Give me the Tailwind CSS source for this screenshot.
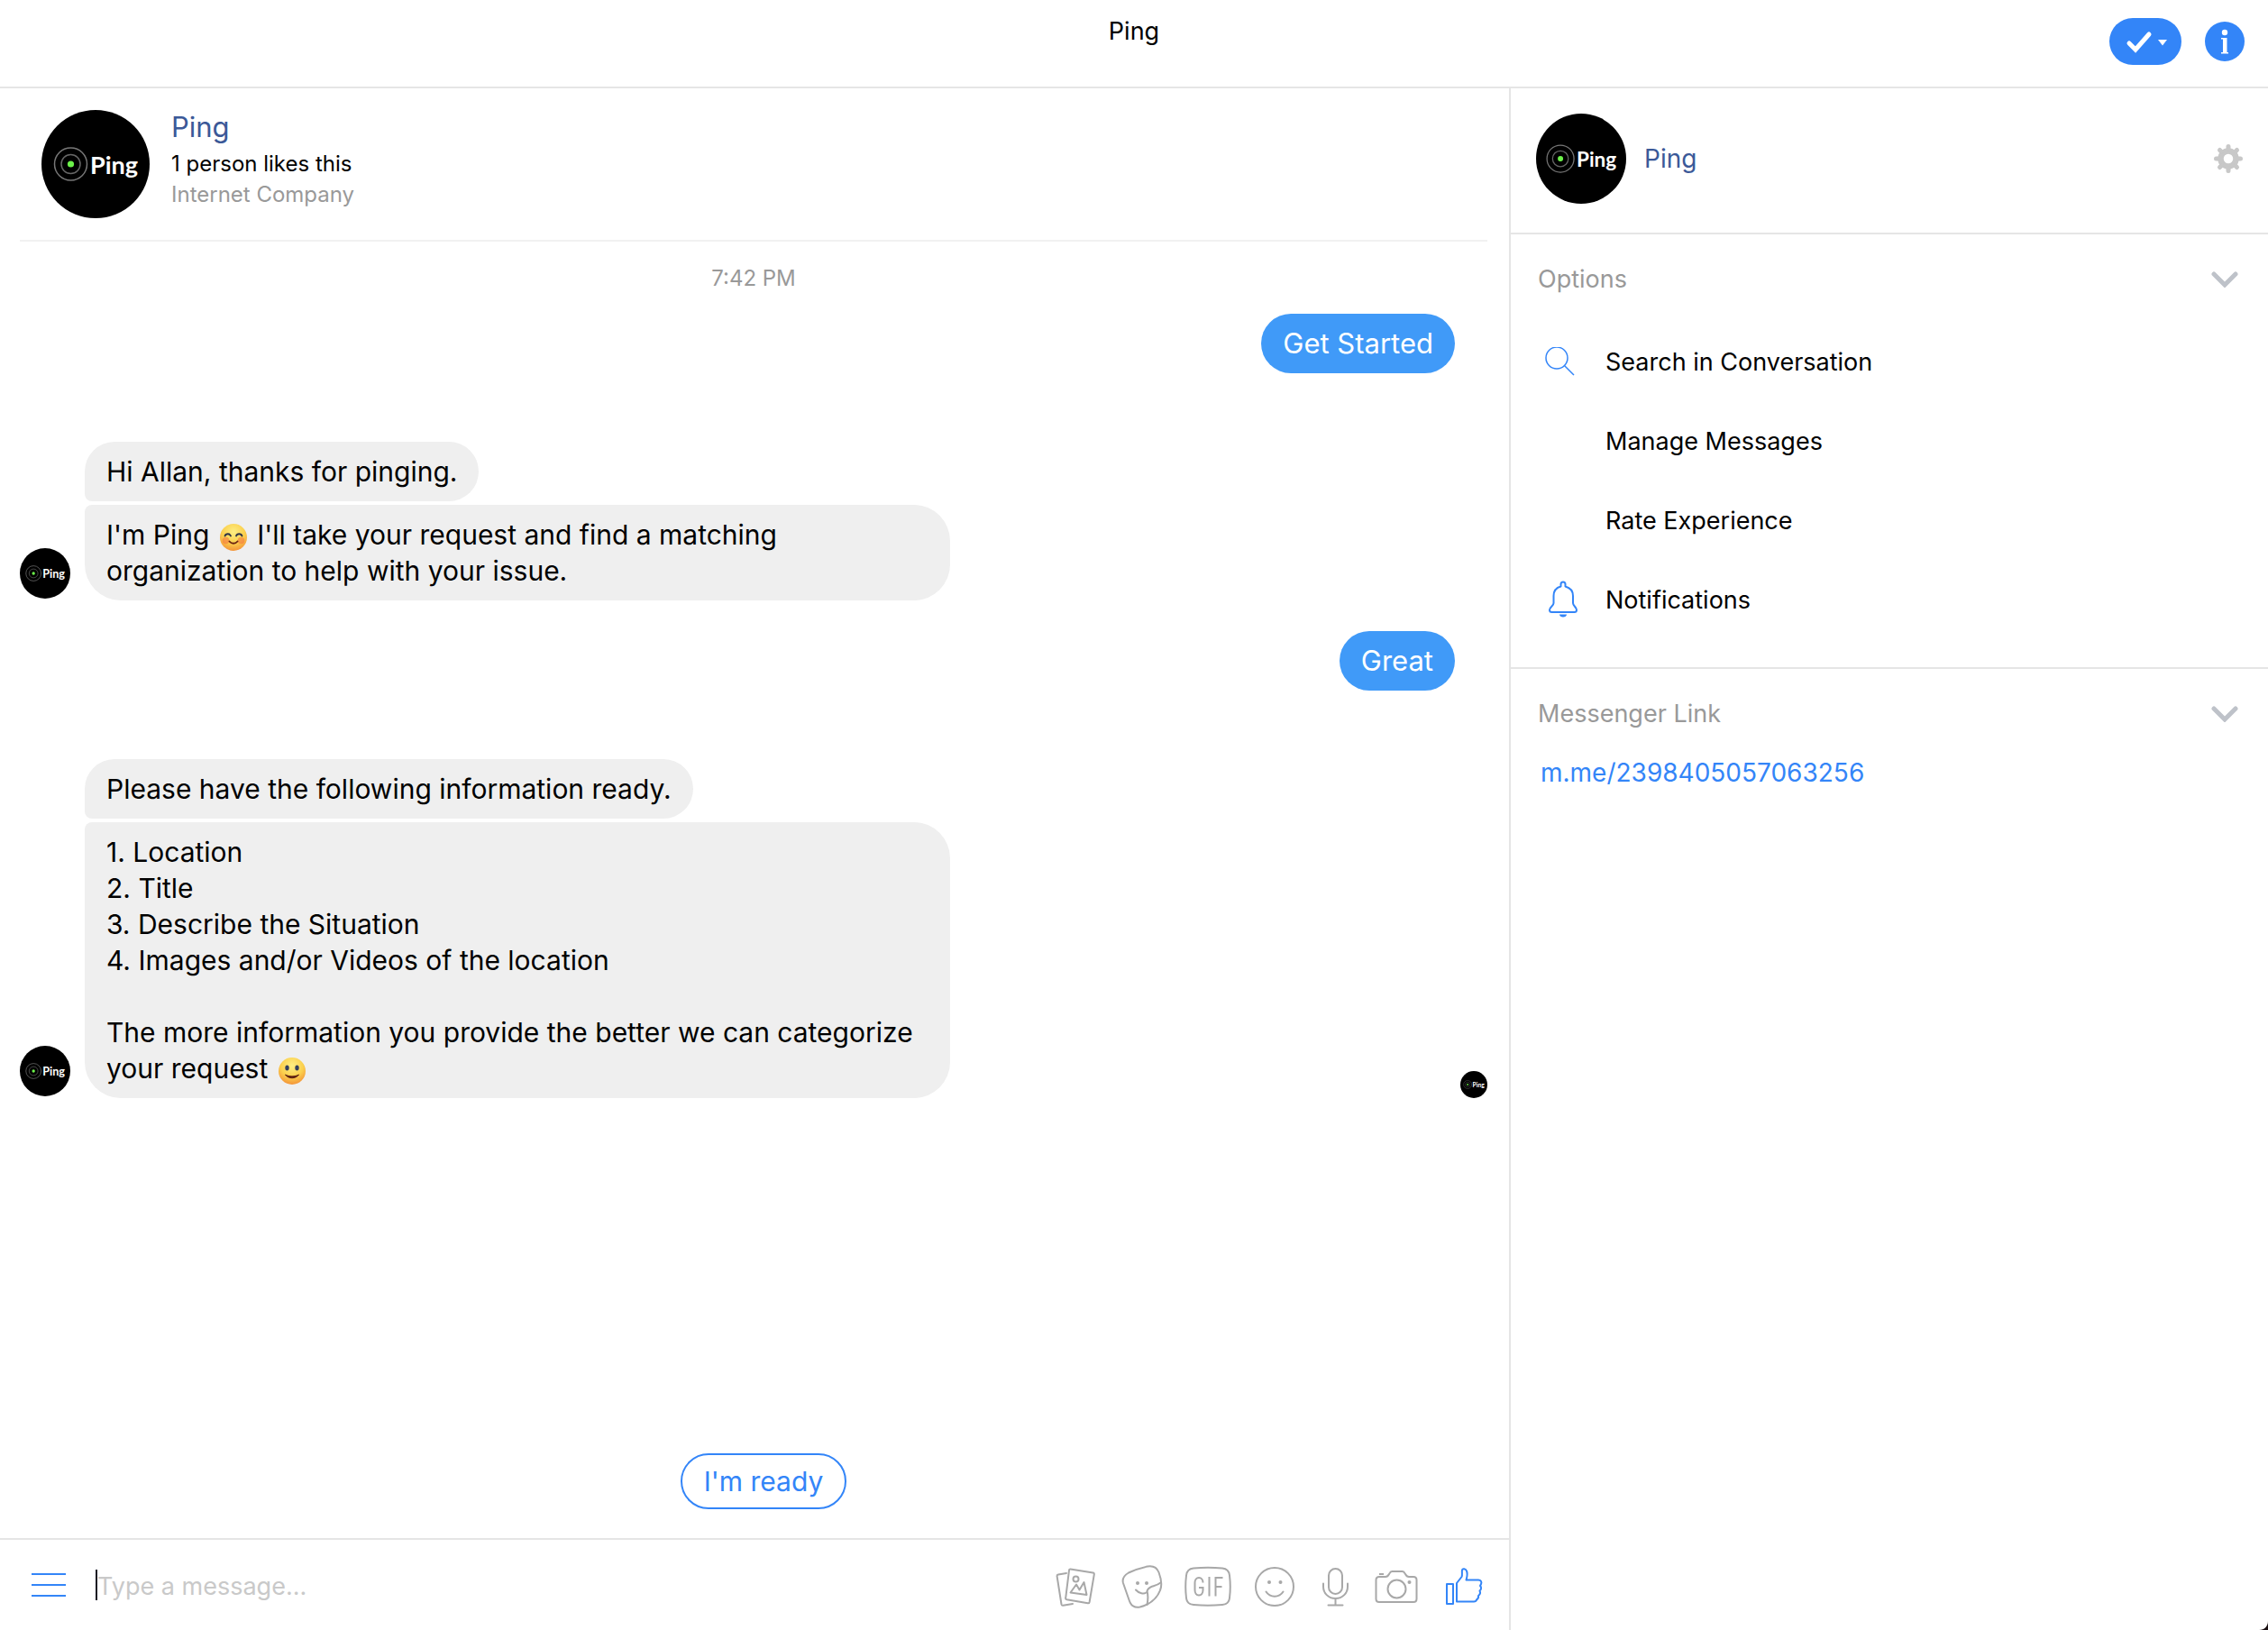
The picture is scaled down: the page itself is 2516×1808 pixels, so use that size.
<!DOCTYPE html>
<html lang="en">
<head>
    <meta charset="UTF-8">
    <meta name="viewport" content="width=device-width, initial-scale=1.0">
    <title>Ping</title>
    <script src="https://cdn.jsdelivr.net/npm/@tailwindcss/browser@4"></script>
</head>
<body class="relative flex flex-col h-screen overflow-hidden bg-white text-black font-['Inter',sans-serif] text-[27px] leading-[34px]">

    <!-- shared drawings -->
    <svg class="absolute size-0">
        <defs>
            <radialGradient id="face" cx="50%" cy="30%" r="75%">
                <stop offset="0" stop-color="#fdee84" />
                <stop offset="0.55" stop-color="#fbd04d" />
                <stop offset="1" stop-color="#f28a35" />
            </radialGradient>
        </defs>
        <symbol id="logo" viewBox="0 0 120 120">
            <circle cx="60" cy="60" r="60" fill="#000" />
            <circle cx="32.500" cy="60" r="18" fill="none" stroke="#777" stroke-width="1.500" />
            <circle cx="32.500" cy="60" r="10.500" fill="none" stroke="#666" stroke-width="1.500" />
            <circle cx="32.500" cy="60" r="3.600" fill="#6cf24a" />
            <text x="54" y="70.500" font-family="Lato, sans-serif" font-weight="700" font-size="27" fill="#fff">Ping</text>
        </symbol>
        <symbol id="chevron" viewBox="0 0 30 18">
            <path d="M3 3l12 12L27 3" fill="none" stroke="#bec2c9" stroke-width="5" stroke-linecap="round" stroke-linejoin="miter" />
        </symbol>
    </svg>

    <header class="flex h-[98px] shrink-0 border-b-2 border-[#e5e5e5] px-[26px]">
        <div class="flex-1"></div>
        <h1 class="mt-[18px]">Ping</h1>
        <div class="flex flex-1 items-start justify-end gap-[26px]">
            <button aria-label="Mark as done" class="mt-5 flex h-[52px] w-20 items-center justify-center rounded-full bg-[#3385f8]">
                <svg class="h-[52px] w-20" viewBox="0 0 80 52">
                    <path d="M22 28l7 7 15-17" fill="none" stroke="#fff" stroke-width="5" stroke-linecap="round" stroke-linejoin="miter" />
                    <path d="M54 24h10l-5 6.500z" fill="#fff" />
                </svg>
            </button>
            <button aria-label="Conversation information" class="mt-6 size-[44px]">
                <svg class="size-[44px]" viewBox="0 0 44 44">
                    <circle cx="22" cy="22" r="22" fill="#3385f8" />
                    <circle cx="22" cy="12" r="3.200" fill="#fff" />
                    <path d="M18 18h6.500v16H26v1.500h-8V34h2V19.500h-2z" fill="#fff" />
                </svg>
            </button>
        </div>
    </header>

    <div class="flex min-h-0 flex-1">

        <!-- conversation -->
        <main class="flex min-w-0 flex-1 flex-col">
            <section class="ml-[22px] mr-6 flex h-[170px] shrink-0 gap-6 border-b-2 border-[#f1f1f1] pl-6 pt-6">
                <svg class="size-[120px]"><use href="#logo" /></svg>
                <div class="pt-px">
                    <h2 class="text-[31px] leading-[36px] text-[#3b5998]"><a href="#">Ping</a></h2>
                    <p class="mt-[6px] text-[24px] leading-[34px]">1 person likes this</p>
                    <p class="text-[24px] leading-[34px] text-[#999]">Internet Company</p>
                </div>
            </section>

            <div class="flex min-h-0 flex-1 flex-col pl-[22px] pr-6 text-[30px] leading-[40px]">
                <time class="mt-6 text-center text-[24px] leading-[34px] text-[#999]">7:42 PM</time>

                <p class="mr-9 mt-[22px] self-end rounded-[33px] bg-[#409af8] px-6 py-[13px] text-[31px] text-white">Get Started</p>

                <div class="mt-[76px] flex items-end gap-4">
                    <svg class="mb-[2px] size-[56px] shrink-0"><use href="#logo" /></svg>
                    <div class="flex max-w-[960px] flex-col items-start gap-1">
                        <p class="rounded-[33px] rounded-bl-[8px] bg-[#efefef] px-6 py-[13px]">Hi Allan, thanks for pinging.</p>
                        <p class="rounded-[40px] rounded-tl-[8px] bg-[#efefef] px-6 py-[13px]">I'm Ping
                            <svg class="mx-[2px] inline-block size-8 align-[-8px]" viewBox="0 0 32 32" role="img" aria-label="smiling face with smiling eyes">
                                <circle cx="16" cy="16" r="15" fill="url(#face)" />
                                <circle cx="7.500" cy="19.500" r="3.800" fill="#f4693f" opacity="0.500" />
                                <circle cx="24.500" cy="19.500" r="3.800" fill="#f4693f" opacity="0.500" />
                                <path d="M6.500 14.500c1-3 5.500-3 6.500 0M19 14.500c1-3 5.500-3 6.500 0" fill="none" stroke="#2f3447" stroke-width="1.800" stroke-linecap="round" />
                                <path d="M11.500 20.500c2.500 3 6.500 3 9 0" fill="none" stroke="#6b2412" stroke-width="1.800" stroke-linecap="round" />
                            </svg>
                            I'll take your request and find a matching organization to help with your issue.</p>
                    </div>
                </div>

                <p class="mr-9 mt-[34px] self-end rounded-[33px] bg-[#409af8] px-6 py-[13px] text-[31px] text-white">Great</p>

                <div class="mt-[76px] flex items-end gap-4">
                    <svg class="mb-[2px] size-[56px] shrink-0"><use href="#logo" /></svg>
                    <div class="flex max-w-[960px] flex-col items-start gap-1">
                        <p class="rounded-[33px] rounded-bl-[8px] bg-[#efefef] px-6 py-[13px]">Please have the following information ready.</p>
                        <div class="rounded-[40px] rounded-tl-[8px] bg-[#efefef] px-6 py-[13px]">
                            <p>1. Location<br>2. Title<br>3. Describe the Situation<br>4. Images and/or Videos of the location</p>
                            <p class="mt-10">The more information you provide the better we can categorize your request
                                <svg class="mx-[2px] inline-block size-8 align-[-8px]" viewBox="0 0 32 32" role="img" aria-label="slightly smiling face">
                                    <circle cx="16" cy="16" r="15" fill="url(#face)" />
                                    <ellipse cx="10.500" cy="12.500" rx="2.200" ry="2.900" fill="#34405c" />
                                    <ellipse cx="21.500" cy="12.500" rx="2.200" ry="2.900" fill="#34405c" />
                                    <path d="M8.500 20c3.500 5 11.500 5 15 0-4 2.500-11 2.500-15 0z" fill="#5e1f10" stroke="#5e1f10" stroke-linejoin="round" />
                                </svg></p>
                        </div>
                    </div>
                    <svg class="ml-auto size-[30px]"><use href="#logo" /></svg>
                </div>

                <button class="mb-8 ml-[22px] mt-auto self-center rounded-full border-2 border-[#3385f8] px-6 py-[9px] text-[#3385f8]">I'm ready</button>
            </div>

            <form class="flex h-[102px] shrink-0 items-center border-t-2 border-[#e5e5e5] pl-[35px] pr-[29px] text-[#a8a8a8]">
                <button type="button" aria-label="Menu" class="mr-[33px]">
                    <svg class="h-[28px] w-[38px]" viewBox="0 0 38 28" stroke="#3385f8" stroke-width="2"><path d="M0 2h38M0 14h38M0 26h38" /></svg>
                </button>
                <span class="h-[34px] w-[2px] bg-[#111122]"></span>
                <input type="text" aria-label="Message" placeholder="Type a message..." class="min-w-0 flex-1 pt-1 text-black outline-none placeholder:text-[#c9c9c9]">
                <div class="flex items-center gap-[26px] pt-1">
                    <button type="button" aria-label="Add photos" class="mr-px">
                        <svg class="h-12 w-[44px]" viewBox="0 0 44 48" fill="none" stroke="currentColor" stroke-width="2" stroke-linejoin="round" stroke-linecap="round">
                            <path d="M16.500 4.500L41.500 8.500c1 .200 1.500.900 1.300 1.800L37.600 41c-.200 1-.900 1.500-1.900 1.300L12.500 38.200c-1-.200-1.500-.900-1.300-1.900L15 5.800c.100-.900.700-1.400 1.500-1.300z" />
                            <path d="M12 9L3 10.500c-1 .200-1.500.900-1.400 1.800L6.500 43.500c.200 1 .900 1.400 1.800 1.300L19 43" />
                            <circle cx="22.500" cy="15.500" r="3" />
                            <path d="M16.500 30.500l6.500-9 3.500 6 5-8.500 3 14z" />
                        </svg>
                    </button>
                    <button type="button" aria-label="Choose a sticker">
                        <svg class="h-12 w-[50px]" viewBox="0 0 50 48" fill="none" stroke="currentColor" stroke-width="2" stroke-linejoin="round" stroke-linecap="round">
                            <path d="M31 1.500C37 .500 41.500 3 43.500 8c3 8 4 14 1.500 20C41.500 37 34 43.500 22.500 46.500c-5.500 1-9.500-1-11.500-6.500L4 20c-1.500-5 1-8.500 6-11.500C16.500 5.500 24 3 31 1.500z" />
                            <path d="M30.500 44c1-5 1.500-10 0-15 .500-3 3.500-4.500 6-5.500 3.500-1 6-1.500 9-4" />
                            <path d="M18 27.500c3.500 4 9 5 12.500 2.500" />
                            <circle cx="20" cy="20" r="2" fill="currentColor" stroke="none" />
                            <circle cx="30" cy="20" r="2" fill="currentColor" stroke="none" />
                        </svg>
                    </button>
                    <button type="button" aria-label="Choose a GIF" class="-ml-1">
                        <svg class="h-12 w-[52px]" viewBox="0 0 52 48" fill="none" stroke="currentColor" stroke-width="2">
                            <path d="M10 3.500c10-1 22-1 32 0 5 .500 7.500 3 8 8 1 8 1 17 0 25-.500 5-3 7-8 7.500-10 1-22 1-32 0-5-.500-7.500-2.500-8-7.500-1-8-1-17 0-25 .500-5 3-7.500 8-8z" />
                            <path d="M20.500 19.500c0-3-1.800-5.500-4.500-5.500s-4.500 2.500-4.500 5.500v8c0 3.500 1.800 6 4.500 6s4.500-2.500 4.500-6V25H16M27.500 13v21.500M34.500 34.500V14h8M34.500 24h7" />
                        </svg>
                    </button>
                    <button type="button" aria-label="Choose an emoji">
                        <svg class="h-12 w-[44px]" viewBox="0 0 44 48" fill="none" stroke="currentColor" stroke-width="2" stroke-linecap="round">
                            <circle cx="22" cy="24" r="21" />
                            <path d="M12.500 29.500c4.500 7 14.500 7 19 0" />
                            <circle cx="16" cy="19" r="2" fill="currentColor" stroke="none" />
                            <circle cx="28.500" cy="19" r="2" fill="currentColor" stroke="none" />
                        </svg>
                    </button>
                    <button type="button" aria-label="Record audio" class="ml-1 mr-[3px]">
                        <svg class="h-12 w-[30px]" viewBox="0 0 30 48" fill="none" stroke="currentColor" stroke-width="2" stroke-linecap="round">
                            <rect x="8" y="4" width="15" height="28" rx="7.500" />
                            <path d="M2 20.500V24c0 7 5.500 13 13.500 13S29 31 29 24v-3.500M15.500 37v7M7.500 44.500h16" />
                        </svg>
                    </button>
                    <button type="button" aria-label="Take a picture">
                        <svg class="h-12 w-[48px]" viewBox="0 0 48 48" fill="none" stroke="currentColor" stroke-width="2" stroke-linejoin="round">
                            <path d="M5 13h7c2 0 3-1 4-3l1-1.500c.500-1 1.500-1.500 2.500-1.500h11c1 0 2 .500 2.500 1.500L34 10c1 2 2 3 4 3h5c2 0 3.500 1.500 3.500 3.500v21c0 2-1.500 3.500-3.500 3.500H5c-2 0-3.500-1.500-3.500-3.500v-21C1.500 14.500 3 13 5 13zM5 10h5" />
                            <circle cx="24.500" cy="26.500" r="10" />
                            <circle cx="38.500" cy="19" r="2" fill="currentColor" stroke="none" />
                        </svg>
                    </button>
                    <button type="button" aria-label="Send a thumbs up" class="ml-1 text-[#3385f8]">
                        <svg class="h-12 w-[42px]" viewBox="0 0 42 48" fill="none" stroke="currentColor" stroke-width="2" stroke-linejoin="round">
                            <path d="M2 21h7v22H2zM13 40V20l5.500-7c1-2 0-5 .500-7.500.500-2 4-1.500 5 1 1.500 3.500.500 6.500-.500 10H37c3 0 4 2.500 3 4.500l-1 2c1.500 1.500 1.500 4-.500 5.500 1 2 .500 4-1.500 5.500.500 2.500-1 4-2 4.500-.500 2-1.500 2-3 2H13z" />
                        </svg>
                    </button>
                </div>
            </form>
        </main>

        <!-- details -->
        <aside class="w-[842px] shrink-0 border-l-2 border-[#e5e5e5]">
            <section class="flex h-[162px] items-center border-b-2 border-[#e5e5e5] pb-1 pl-7 pr-[27px]">
                <svg class="size-[100px]"><use href="#logo" /></svg>
                <a href="#" class="ml-5 text-[28px] text-[#3b5998]">Ping</a>
                <button aria-label="Settings" class="ml-auto">
                    <svg class="size-[34px]" viewBox="-17 -17 34 34" fill="none" stroke="#c8c8c8">
                        <circle r="8.500" stroke-width="6.500" />
                        <path d="M0-11v-2.500M0 11v2.500M-11 0h-2.500M11 0h2.500M-8-8l-1.500-1.500M8-8l1.500-1.500M-8 8l-1.500 1.500M8 8l1.500 1.500" stroke-width="5" stroke-linecap="round" />
                    </svg>
                </button>
            </section>

            <section class="border-b-2 border-[#e5e5e5] pb-[30px] pl-[30px] pr-[33px] pt-[33px]">
                <div class="flex items-center justify-between text-[#999]">
                    <h3>Options</h3>
                    <button aria-label="Toggle options"><svg class="h-[18px] w-[30px]"><use href="#chevron" /></svg></button>
                </div>
                <ul class="mt-[31px]">
                    <li>
                        <button class="flex h-[88px] w-full items-center text-left">
                            <span class="w-[75px]">
                                <svg class="ml-2 size-[34px]" viewBox="0 0 34 34" fill="none" stroke="#3385f8" stroke-width="1.500">
                                    <circle cx="13" cy="12" r="12" /><path d="M21.500 20.500L32 31" />
                                </svg>
                            </span>
                            Search in Conversation
                        </button>
                    </li>
                    <li><button class="flex h-[88px] w-full items-center pl-[75px] text-left">Manage Messages</button></li>
                    <li><button class="flex h-[88px] w-full items-center pl-[75px] text-left">Rate Experience</button></li>
                    <li>
                        <button class="flex h-[88px] w-full items-center text-left">
                            <span class="w-[75px]">
                                <svg class="ml-3 h-[44px] w-[32px]" viewBox="0 0 32 44" fill="none" stroke="#3385f8" stroke-width="2" stroke-linejoin="round">
                                    <path d="M13.500 6.500V4c0-3.500 5-3.500 5 0v2.500C24 8 27 12 27 17v8c0 3 4 4.500 4 7.500 0 1.500-1 2.500-2.500 2.500h-25C2 35 1 34 1 32.500 1 29.500 5.500 28 5.500 25v-8c0-5 2.500-9 8-10.500z" />
                                    <path d="M12 37.500h8c0 4-8 4-8 0z" fill="#3385f8" stroke="none" />
                                </svg>
                            </span>
                            Notifications
                        </button>
                    </li>
                </ul>
            </section>

            <section class="pl-[30px] pr-[33px] pt-[33px]">
                <div class="flex items-center justify-between text-[#999]">
                    <h3>Messenger Link</h3>
                    <button aria-label="Toggle messenger link"><svg class="h-[18px] w-[30px]"><use href="#chevron" /></svg></button>
                </div>
                <a href="#" class="ml-[3px] mt-[31px] block text-[28px] text-[#3385f8]">m.me/2398405057063256</a>
            </section>
        </aside>
    </div>

    <!-- rounded window corner -->
    <svg class="absolute bottom-0 right-0 size-[10px]" viewBox="0 0 10 10"><path d="M10 0v10H0C6 10 10 6 10 0z" fill="#1a1012" /></svg>
</body>
</html>
